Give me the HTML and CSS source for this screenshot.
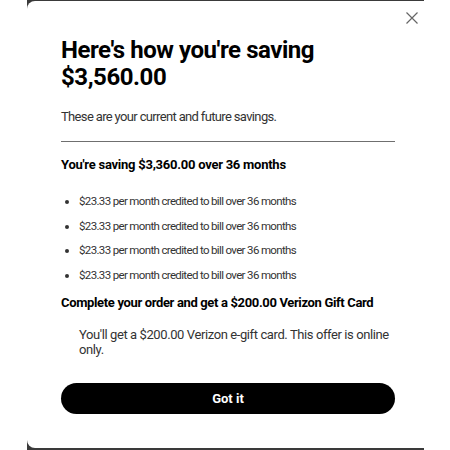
FILE: index.html
```html
<!DOCTYPE html>
<html lang="en">
<head>
    <meta charset="UTF-8">
    <meta name="viewport" content="width=device-width, initial-scale=1.0">
    <title>Savings</title>
    <link rel="stylesheet" href="styles.css">
</head>
<body>
    <div class="backdrop">
        <div class="modal">
            <button class="close" aria-label="Close">
                <svg width="12" height="12" viewBox="0 0 12 12">
                    <path d="M0.5 0.5 L11.5 11.5 M11.5 0.5 L0.5 11.5" stroke="#666" stroke-width="1.2" fill="none"/>
                </svg>
            </button>
            <h1>Here's how you're saving $3,560.00</h1>
            <p class="intro">These are your current and future savings.</p>
            <h2>You're saving $3,360.00 over 36 months</h2>
            <ul class="credits">
                <li>$23.33 per month credited to bill over 36 months</li>
                <li>$23.33 per month credited to bill over 36 months</li>
                <li>$23.33 per month credited to bill over 36 months</li>
                <li>$23.33 per month credited to bill over 36 months</li>
            </ul>
            <h2 class="gift">Complete your order and get a $200.00 Verizon Gift Card</h2>
            <p class="gift-text">You'll get a $200.00 Verizon e-gift card. This offer is online only.</p>
            <button class="got-it">Got it</button>
        </div>
    </div>
</body>
</html>
```

FILE: styles.css
```css
body {
    margin: 0;
    background-color: #fff;
    font-family: Roboto, "Noto Sans", sans-serif;
    color: #000;
}

.backdrop {
    width: 397px;
    height: 450px;
    margin-left: 27px;
    padding: 1px 0 2px;
    box-sizing: border-box;
    background-color: #3a3a3a;
}

.modal {
    position: relative;
    height: 100%;
    background-color: #fff;
    border-radius: 8px 0 0 8px;
    padding: 36px 29px 0 34px;
    box-sizing: border-box;
}

.close {
    position: absolute;
    top: 11px;
    right: 6px;
    background: none;
    border: none;
    padding: 0;
    cursor: pointer;
}

h1 {
    margin: 0;
    font-size: 24px;
    line-height: 27px;
    font-weight: 700;
    letter-spacing: -0.45px;
}

.intro {
    margin: 18px 0 0;
    padding-bottom: 16px;
    font-size: 13px;
    line-height: 16px;
    color: #333;
    border-bottom: 1px solid #6f6f6f;
    letter-spacing: -0.65px;
}

h2 {
    margin: 15px 0 0;
    font-size: 13px;
    line-height: 16px;
    font-weight: 700;
    letter-spacing: -0.25px;
}

.credits {
    margin: 20px 0 0;
    padding-left: 18px;
    font-size: 11.5px;
    line-height: 16px;
    color: #333;
    letter-spacing: -0.65px;
}

.credits li {
    margin-bottom: 8.5px;
}

.gift {
    margin-top: 12px;
    letter-spacing: -0.35px;
}

.gift-text {
    margin: 16px 0 0 18px;
    font-size: 13px;
    line-height: 15px;
    color: #333;
    letter-spacing: -0.4px;
}

.got-it {
    display: block;
    width: 100%;
    height: 31px;
    margin-top: 26px;
    background-color: #000;
    color: #fff;
    border: none;
    border-radius: 16px;
    font-family: inherit;
    font-size: 13px;
    font-weight: 700;
    cursor: pointer;
}
```
